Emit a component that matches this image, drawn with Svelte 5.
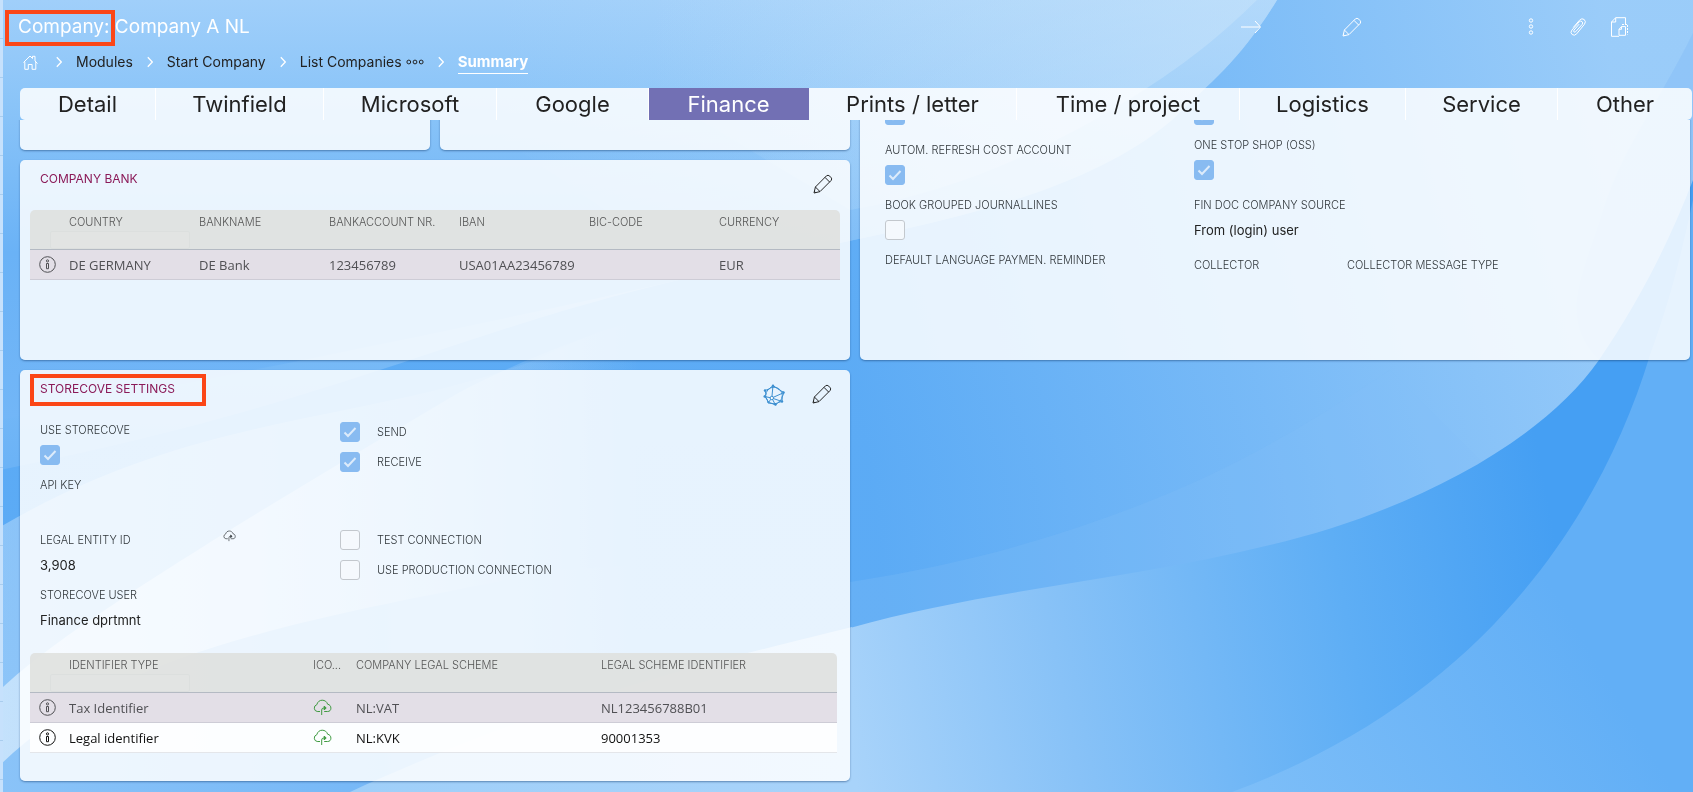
<script lang="ts">
	type Row = { id: string; cells: string[]; selected?: boolean };

	const crumbs = ['Modules', 'Start Company', 'List Companies'];

	// weight = share of the bar that the tab takes
	const tabs = [
		{ label: 'Detail', weight: 136 },
		{ label: 'Twinfield', weight: 168 },
		{ label: 'Microsoft', weight: 173 },
		{ label: 'Google', weight: 152 },
		{ label: 'Finance', weight: 160 },
		{ label: 'Prints / letter', weight: 208 },
		{ label: 'Time / project', weight: 223 },
		{ label: 'Logistics', weight: 166 },
		{ label: 'Service', weight: 152 },
		{ label: 'Other', weight: 134 }
	];
	const tabColumns = tabs.map((tab) => `${tab.weight}fr`).join(' ');

	let activeTab = $state('Finance');

	const bankColumns = ['Country', 'Bankname', 'Bankaccount nr.', 'IBAN', 'BIC-code', 'Currency'];
	const bankRows: Row[] = [
		{
			id: 'bank-1',
			cells: ['DE GERMANY', 'DE Bank', '123456789', 'USA01AA23456789', '', 'EUR'],
			selected: true
		}
	];

	const identifierRows: Row[] = [
		{ id: 'tax', cells: ['Tax Identifier', 'NL:VAT', 'NL123456788B01'], selected: true },
		{ id: 'legal', cells: ['Legal identifier', 'NL:KVK', '90001353'] }
	];
</script>

{#snippet pencil()}
	<svg class="icon" viewBox="0 0 20 20" aria-hidden="true">
		<path d="M1 19l1.400-6L13.500 1.800q1.500-1.300 3.300.4l1 1q1.700 1.700.3 3.300L7 17.600z" />
		<path d="M2.400 13l4.600 4.600M12 3.400l4.700 4.700M1.200 17.200l1.600 1.500" />
	</svg>
{/snippet}

{#snippet info()}
	<svg class="icon info" viewBox="0 0 17 17" aria-hidden="true">
		<circle cx="8.500" cy="8.500" r="7.800" />
		<circle cx="8.500" cy="4.900" r="1.100" />
		<path d="M7.500 7.500h2v5.200h-2z" />
	</svg>
{/snippet}

{#snippet cloud()}
	<svg class="icon cloud" viewBox="0 0 19 17" aria-hidden="true">
		<path d="M7 12.500H4.200A3.500 3.500 0 0 1 3.800 5.700C4.500 2.800 6.700 1.200 9.200 1.200c2.600 0 4.700 1.500 5.400 4 2.200.4 3.300 2 3.300 4 0 2.100-1.300 3.300-3.300 3.300h-3.400" />
		<path d="M8.700 16V11q0-2 2-2h1.600" />
		<path d="M11.200 7l2 2-2 2z" fill="currentColor" />
	</svg>
{/snippet}

{#snippet chevron()}
	<svg class="icon chevron" viewBox="0 0 6 12" aria-hidden="true">
		<path d="M.8 1.200L5.300 6 .8 10.800" />
	</svg>
{/snippet}

<svg class="backdrop" viewBox="0 0 1693 792" preserveAspectRatio="none" aria-hidden="true">
	<defs>
		<linearGradient id="sky" x1="0" y1="0" x2="0" y2="1">
			<stop offset="0" stop-color="#a0cffa" />
			<stop offset=".25" stop-color="#8ac4f8" />
			<stop offset=".6" stop-color="#6ab2f6" />
			<stop offset="1" stop-color="#72b6f7" />
		</linearGradient>
		<linearGradient id="glow" x1=".2" y1="0" x2="1" y2="0">
			<stop offset="0" stop-color="#c4e2fb" stop-opacity="0" />
			<stop offset="1" stop-color="#c4e2fb" />
		</linearGradient>
		<linearGradient id="fade" gradientUnits="userSpaceOnUse" x1="0" y1="0" x2="640" y2="0">
			<stop offset="0" stop-color="#d6ebfd" />
			<stop offset=".4" stop-color="#d6ebfd" stop-opacity=".7" />
			<stop offset="1" stop-color="#d6ebfd" stop-opacity="0" />
		</linearGradient>
		<linearGradient id="low" gradientUnits="userSpaceOnUse" x1="0" y1="0" x2="640" y2="0">
			<stop offset="0" stop-color="#8ac3f8" />
			<stop offset=".6" stop-color="#76b8f7" />
			<stop offset="1" stop-color="#76b8f7" stop-opacity="0" />
		</linearGradient>
		<linearGradient id="right" gradientUnits="userSpaceOnUse" x1="860" y1="400" x2="1640" y2="300">
			<stop offset="0" stop-color="#5aaaf5" />
			<stop offset=".5" stop-color="#78baf7" />
			<stop offset="1" stop-color="#9accf9" />
		</linearGradient>
		<linearGradient id="band" gradientUnits="userSpaceOnUse" x1="840" y1="700" x2="1560" y2="560">
			<stop offset="0" stop-color="#a8d3fa" />
			<stop offset=".3" stop-color="#88c2f7" />
			<stop offset=".7" stop-color="#5eaef5" />
			<stop offset="1" stop-color="#459ff3" />
		</linearGradient>
		<linearGradient id="bandleft" gradientUnits="userSpaceOnUse" x1="350" y1="0" x2="850" y2="0">
			<stop offset="0" stop-color="#9fcff9" />
			<stop offset="1" stop-color="#a8d3fa" />
		</linearGradient>
		<linearGradient id="corner" gradientUnits="userSpaceOnUse" x1="1240" y1="792" x2="1560" y2="600">
			<stop offset="0" stop-color="#7dbef8" />
			<stop offset="1" stop-color="#62aff6" />
		</linearGradient>
	</defs>
	<rect width="1693" height="792" fill="url(#sky)" />
	<path d="M1277 0C1240 60 1215 78 1172 120 1060 215 860 232 700 275 440 335 350 400 0 470V792H1693V0z" fill="url(#right)" opacity=".9" />
	<path d="M1277 0C1240 60 1215 78 1172 120 1060 215 860 232 700 275 440 335 200 380 0 420V0z" fill="url(#sky)" />
	<path d="M1277 0C1240 60 1215 78 1172 120 1060 215 860 232 700 275L300 0z" fill="url(#glow)" opacity=".5" />
	<path d="M1257 0C1220 36 1190 60 1147 88 1050 150 960 190 850 210L500 0z" fill="url(#glow)" opacity=".6" />
	<path d="M1693 33C1655 110 1620 150 1600 220 1580 280 1560 320 1599 360L1693 400z" fill="#84bdf7" opacity=".45" />
	<path d="M0 527C200 410 360 425 535 360 620 320 700 290 850 240V792H0z" fill="url(#fade)" opacity=".4" />
	<path d="M0 690C60 630 260 510 460 392 560 340 700 290 850 280V792H0z" fill="url(#fade)" opacity=".75" />
	<path d="M0 765C120 650 300 620 560 570L700 560V792H0z" fill="url(#low)" />
	<path d="M850 582C960 565 1050 540 1140 505 1230 470 1300 430 1390 370L1500 480 1223 562 850 628z" fill="#84c0f8" opacity=".25" />
	<path d="M1693 180C1670 240 1640 300 1599 360 1550 430 1450 490 1332 528 1170 578 1000 585 850 628L850 792H1693z" fill="url(#band)" />
	<path d="M852 627C740 655 560 695 350 792H852z" fill="url(#bandleft)" />
	<path d="M1693 200C1680 260 1670 300 1650 355 1600 520 1480 700 1232 792H1693z" fill="url(#corner)" />
</svg>

<div class="page">
	<aside></aside>
	<div class="content">
		<header>
			<h1><span class="marked">Company:</span> Company A NL</h1>
			<div class="toolbar">
				<button class="tool" aria-label="Next">
					<svg class="icon" viewBox="0 0 20 20" aria-hidden="true">
						<path d="M0 10h19M14 4l5.500 6-5.500 6" />
					</svg>
				</button>
				<button class="tool edit" aria-label="Edit company">{@render pencil()}</button>
				<button class="tool more" aria-label="More">
					<svg class="icon" viewBox="0 0 20 20" aria-hidden="true">
						<circle cx="10" cy="3.500" r="1.700" />
						<circle cx="10" cy="9.500" r="1.700" />
						<circle cx="10" cy="15.500" r="1.700" />
					</svg>
				</button>
				<button class="tool attach" aria-label="Attachments">
					<svg class="icon" viewBox="0 0 20 20" aria-hidden="true">
						<path d="M5.200 10.500l6.300-7.300q2.400-2.500 4.700-.7 2.200 2.100.3 4.700L8.700 16.800q-2.300 2.500-4.600.7-2.200-2-.2-4.400l7.200-8.200q1.500-1.500 2.900-.3 1.300 1.300.2 2.800l-6.500 7.300q-.9.900-1.700.2-.8-.8 0-1.800l5.200-6" />
					</svg>
				</button>
				<button class="tool" aria-label="Documents">
					<svg class="icon" viewBox="0 0 20 20" aria-hidden="true">
						<path d="M9 19.300H1.500V5L5.700.7h9.800V7M1.500 5h4.200V.7" />
						<path d="M9 18.300v-6l2.500-2.700h4v8.700zM9 12.300h2.500V9.600" />
						<path d="M12 7.500h5.500v10" stroke-dasharray="2 1" />
					</svg>
				</button>
			</div>
		</header>

		<nav class="crumbs" aria-label="Breadcrumb">
			<a href="#home" aria-label="Home">
				<svg class="icon home" viewBox="0 0 15 15" aria-hidden="true">
					<path d="M.5 7.500L7 1l2.500 2.500V1.300H12V6l2.500 2.500M1.800 6.800v7.500h3.500V9.500h3.800v4.800h3.700V6.800" />
				</svg>
			</a>
			{#each crumbs as crumb, i}
				{@render chevron()}
				<a href="#{crumb}">
					{crumb}{#if i === crumbs.length - 1}
						<svg class="icon dots" viewBox="0 0 18 6" aria-hidden="true">
							<circle cx="2.800" cy="3" r="1.900" />
							<circle cx="9" cy="3" r="1.900" />
							<circle cx="15.200" cy="3" r="1.900" />
						</svg>
					{/if}
				</a>
			{/each}
			{@render chevron()}
			<a href="#summary" class="current">Summary</a>
		</nav>

		<div class="tabs" style="grid-template-columns: {tabColumns}">
			{#each tabs as tab}
				<button class:active={tab.label === activeTab} onclick={() => (activeTab = tab.label)}>
					{tab.label}
				</button>
			{/each}
		</div>

		<main>
			<div class="grid">
				<div class="stack">
					<div class="pair">
						<section class="card blank"></section>
						<section class="card blank"></section>
					</div>

					<section class="card bank">
						<div class="card-head">
							<h2>Company bank</h2>
							<button class="tool" aria-label="Edit bank">{@render pencil()}</button>
						</div>
						<table>
							<colgroup>
								<col class="col-info" />
								{#each bankColumns.slice(1) as _}<col class="col-bank" />{/each}
								<col />
							</colgroup>
							<thead>
								<tr>
									<th></th>
									{#each bankColumns as column, i}
										<th>
											{column}
											{#if i === 0}<input class="filter" aria-label="Filter country" />{/if}
										</th>
									{/each}
								</tr>
							</thead>
							<tbody>
								{#each bankRows as row (row.id)}
									<tr class:selected={row.selected}>
										<td class="info-cell">{@render info()}</td>
										{#each row.cells as cell}<td>{cell}</td>{/each}
									</tr>
								{/each}
							</tbody>
						</table>
					</section>
				</div>

				<section class="card options">
					<div>
						<div class="field tall">
							<label for="opt-a">&nbsp;</label>
							<input id="opt-a" type="checkbox" checked />
						</div>
						<div class="field">
							<label for="refresh">Autom. refresh cost account</label>
							<input id="refresh" type="checkbox" checked />
						</div>
						<div class="field">
							<label for="grouped">Book grouped journallines</label>
							<input id="grouped" type="checkbox" />
						</div>
						<div class="field"><span class="label">Default language paymen. reminder</span></div>
					</div>
					<div>
						<div class="field">
							<label for="opt-b">&nbsp;</label>
							<input id="opt-b" type="checkbox" checked />
						</div>
						<div class="field tall">
							<label for="oss">One stop shop (OSS)</label>
							<input id="oss" type="checkbox" checked />
						</div>
						<div class="field tall">
							<span class="label">Fin doc company source</span>
							<span class="value">From (login) user</span>
						</div>
						<div class="collector">
							<span class="label">Collector</span>
							<span class="label">Collector message type</span>
						</div>
					</div>
				</section>

				<section class="card storecove">
					<div class="card-head">
						<h2 class="marked">Storecove settings</h2>
						<button class="tool network" aria-label="Storecove network">
							<svg class="icon" viewBox="0 0 22 22" aria-hidden="true">
								<circle cx="11" cy="11.500" r="8.300" />
								<path d="M10 1.500L6 5 2 6.500 3 10 1.500 12.500 4 15 5 19l4 .5 3.500 1.500 2.500-2.500 4-1 .2-4.500L21 8.500 16.500 6z" />
								<path d="M10 1.500L8.800 14M8.800 14L1.500 12.500M8.800 14L5 19M8.800 14l3.700 7M8.800 14l10.200 3.500M8.800 14L21 8.500" />
								<g fill="currentColor">
									<circle cx="10" cy="1.700" r="1.200" />
									<circle cx="2" cy="6.500" r="1.200" />
									<circle cx="1.700" cy="12.500" r="1.200" />
									<circle cx="12.500" cy="20.500" r="1.200" />
									<circle cx="19" cy="17.500" r="1.200" />
									<circle cx="20.500" cy="8.500" r="1.200" />
								</g>
								<circle cx="8.800" cy="14" r="1.700" fill="#fff" />
							</svg>
						</button>
						<button class="tool" aria-label="Edit storecove settings">{@render pencil()}</button>
					</div>
					<div class="settings">
						<div>
							<div class="field">
								<label for="use">Use storecove</label>
								<input id="use" type="checkbox" checked />
							</div>
							<div class="field"><span class="label">API key</span></div>
							<div class="field">
								<span class="label entity">Legal entity ID {@render cloud()}</span>
								<span class="value">3,908</span>
							</div>
							<div class="field">
								<span class="label">Storecove user</span>
								<span class="value">Finance dprtmnt</span>
							</div>
						</div>
						<div class="switches">
							<label><input type="checkbox" checked />Send</label>
							<label><input type="checkbox" checked />Receive</label>
							<label class="apart"><input type="checkbox" />Test connection</label>
							<label><input type="checkbox" />Use production connection</label>
						</div>
					</div>
					<table>
						<colgroup>
							<col class="col-info" />
							<col class="col-type" />
							<col class="col-icon" />
							<col class="col-scheme" />
							<col />
						</colgroup>
						<thead>
							<tr>
								<th></th>
								<th>
									Identifier type
									<input class="filter" aria-label="Filter identifier type" />
								</th>
								<th>Ico...</th>
								<th>Company legal scheme</th>
								<th>Legal scheme identifier</th>
							</tr>
						</thead>
						<tbody>
							{#each identifierRows as row (row.id)}
								<tr class:selected={row.selected}>
									<td class="info-cell">{@render info()}</td>
									<td>{row.cells[0]}</td>
									<td class="cloud-cell">{@render cloud()}</td>
									<td>{row.cells[1]}</td>
									<td>{row.cells[2]}</td>
								</tr>
							{/each}
						</tbody>
					</table>
				</section>
			</div>
		</main>
	</div>
</div>

<style>
	:global(body) {
		margin: 0;
		background: #72b6f7;
	}

	.backdrop {
		position: fixed;
		inset: 0;
		width: 100%;
		height: 100%;
	}

	.page {
		position: relative;
		display: flex;
		min-height: 100vh;
		font-family: Inter, 'Open Sans', sans-serif;
		font-size: 14px;
		color: #222;
	}

	* {
		box-sizing: border-box;
	}

	aside {
		width: 3px;
		background: repeating-linear-gradient(#c6e1fc 0 38px, #a9cdee 38px 39px);
	}

	.content {
		flex: 1;
		min-width: 0;
	}

	button {
		font: inherit;
		border: 0;
		background: none;
		padding: 0;
		color: inherit;
		cursor: pointer;
	}

	.icon {
		display: block;
		width: 20px;
		height: 20px;
		fill: none;
		stroke: currentColor;
		stroke-width: 1;
	}

	.icon g {
		stroke: none;
	}

	/* header */
	header {
		display: flex;
		align-items: center;
		height: 50px;
		padding: 4px 63px 0 15px;
		color: #fff;
	}

	h1 {
		margin: 0;
		font-size: 19px;
		font-weight: 400;
		line-height: 28px;
	}

	.marked {
		position: relative;
	}

	.marked::after {
		content: '';
		position: absolute;
		border: 4px solid #fb4617;
	}

	h1 .marked::after {
		inset: -5px -5px -8px -13px;
	}

	.toolbar {
		display: flex;
		margin-left: auto;
	}

	.tool {
		width: 20px;
		height: 20px;
	}

	.edit {
		margin-left: 81px;
	}

	.more {
		margin-left: 159px;
	}

	.attach {
		margin: 0 22px 0 27px;
	}

	.crumbs {
		display: flex;
		align-items: center;
		gap: 14px;
		height: 24px;
		margin-bottom: 14px;
		padding-left: 20px;
		color: #fff;
	}

	.crumbs a {
		display: flex;
		align-items: center;
		gap: 4px;
		line-height: 22px;
		color: #222;
		text-decoration: none;
	}

	.crumbs .home {
		width: 15px;
		height: 15px;
		margin-right: 4px;
		color: #fff;
	}

	.crumbs .dots {
		width: 18px;
		height: 6px;
	}

	.crumbs .chevron {
		width: 6px;
		height: 12px;
		stroke-width: 1.3;
	}

	.crumbs .current {
		color: #fff;
		font-size: 15px;
		font-weight: 700;
		border-bottom: 1px solid #fff;
	}

	/* tabs */
	.tabs {
		display: grid;
		margin: 0 1px 0 17px;
		border-radius: 5px;
		overflow: hidden;
	}

	.tabs button {
		height: 32px;
		background: rgba(255, 255, 255, 0.85);
		border-right: 1px solid #fff;
		font-size: 22px;
		line-height: 32px;
		white-space: nowrap;
	}

	.tabs button:last-child {
		border-right: 0;
	}

	.tabs .active {
		background: #7270b4;
		border-right-color: #7270b4;
		color: #fff;
	}

	/* cards */
	main {
		overflow: hidden;
		padding: 0 3px 11px 17px;
	}

	.grid {
		display: grid;
		grid-template-columns: 1fr 1fr;
		gap: 10px;
		margin-top: -40px;
	}

	.stack {
		display: flex;
		flex-direction: column;
		gap: 10px;
	}

	.pair {
		display: grid;
		grid-template-columns: 1fr 1fr;
		gap: 10px;
	}

	.card {
		padding: 0 10px;
		background: rgba(255, 255, 255, 0.85);
		border-radius: 5px;
		box-shadow: 0 1px 2px rgba(20, 60, 110, 0.5);
	}

	.blank {
		height: 70px;
	}

	.bank {
		min-height: 200px;
	}

	.card-head {
		display: flex;
		align-items: flex-start;
		height: 50px;
		padding: 9px 7px 0 10px;
	}

	.card-head .tool {
		margin-top: 5px;
	}

	h2 {
		margin: 0 auto 0 0;
		color: #8b1a58;
		font-size: 12px;
		font-weight: 400;
		line-height: 20px;
		text-transform: uppercase;
	}

	h2.marked::after {
		inset: -5px -31px -7px -10px;
	}

	.network {
		margin-right: 29px;
		color: #3d8fd0;
	}

	.network .icon {
		width: 22px;
		height: 22px;
	}

	/* fields */
	.options {
		display: grid;
		grid-template-columns: 309px 1fr;
		padding-left: 25px;
	}

	.field {
		display: flex;
		flex-direction: column;
		gap: 5px;
		min-height: 55px;
	}

	.tall {
		min-height: 60px;
	}

	label,
	.label {
		color: #30363a;
		font-size: 11px;
		font-weight: 300;
		line-height: 20px;
		text-transform: uppercase;
	}

	.value {
		font-size: 13px;
		line-height: 20px;
	}

	.collector {
		display: grid;
		grid-template-columns: 153px 1fr;
	}

	input[type='checkbox'] {
		appearance: none;
		flex: none;
		width: 20px;
		height: 20px;
		margin: 0;
		border: 1px solid #c3c8cd;
		border-radius: 3px;
		background: #f5f9fd;
	}

	input[type='checkbox']:checked {
		border-color: #88bbf1;
		background: #88bbf1
			url("data:image/svg+xml,%3Csvg xmlns='http://www.w3.org/2000/svg' viewBox='0 0 18 18'%3E%3Cpath d='M3.500 9.500l3.500 3.500 7.500-8' fill='none' stroke='%23dcebfb' stroke-width='2'/%3E%3C/svg%3E");
	}

	.settings {
		display: grid;
		grid-template-columns: 300px 1fr;
		min-height: 233px;
		padding-left: 10px;
	}

	.entity {
		display: flex;
		justify-content: space-between;
		width: 196px;
	}

	.entity .cloud {
		width: 13px;
		height: 12px;
	}

	.switches {
		display: flex;
		flex-direction: column;
		gap: 10px;
		padding-top: 2px;
	}

	.switches label {
		display: flex;
		gap: 17px;
	}

	.switches .apart {
		margin-top: 48px;
	}

	.storecove {
		padding: 0 13px 28px 10px;
	}

	.storecove .card-head {
		padding-right: 5px;
	}

	/* tables */
	table {
		width: 100%;
		table-layout: fixed;
		border-collapse: separate;
		border-spacing: 0;
		font-family: 'Open Sans', 'Noto Sans', sans-serif;
		font-size: 13px;
	}

	.col-info {
		width: 38px;
	}

	.col-bank {
		width: 130px;
	}

	.col-type {
		width: 244px;
	}

	.col-icon {
		width: 43px;
	}

	.col-scheme {
		width: 245px;
	}

	th {
		height: 40px;
		padding: 4px 1px 0;
		border-bottom: 1px solid #b4bac3;
		background: rgba(222, 223, 221, 0.85);
		color: #555;
		font-family: Inter, sans-serif;
		font-size: 11px;
		font-weight: 300;
		line-height: 17px;
		text-align: left;
		text-transform: uppercase;
		vertical-align: top;
		white-space: nowrap;
	}

	th:first-child {
		border-top-left-radius: 5px;
	}

	th:last-child {
		border-top-right-radius: 5px;
	}

	.filter {
		display: block;
		width: 140px;
		height: 18px;
		margin-left: -19px;
		border: 1px solid #dcdfde;
		border-radius: 2px;
		background: #e2e4e3;
	}

	td {
		height: 30px;
		padding: 0 1px;
		border-bottom: 1px solid #e4e6ea;
		background: rgba(255, 255, 255, 0.85);
		color: #111;
		white-space: nowrap;
	}

	.selected td {
		border-bottom-color: #cdccd6;
		background: #e3dfe7;
		color: #505054;
	}

	.info-cell {
		padding-left: 9px;
	}

	.info {
		width: 17px;
		height: 17px;
	}

	.cloud-cell .cloud {
		width: 19px;
		height: 17px;
		color: #3f9a41;
	}
</style>
